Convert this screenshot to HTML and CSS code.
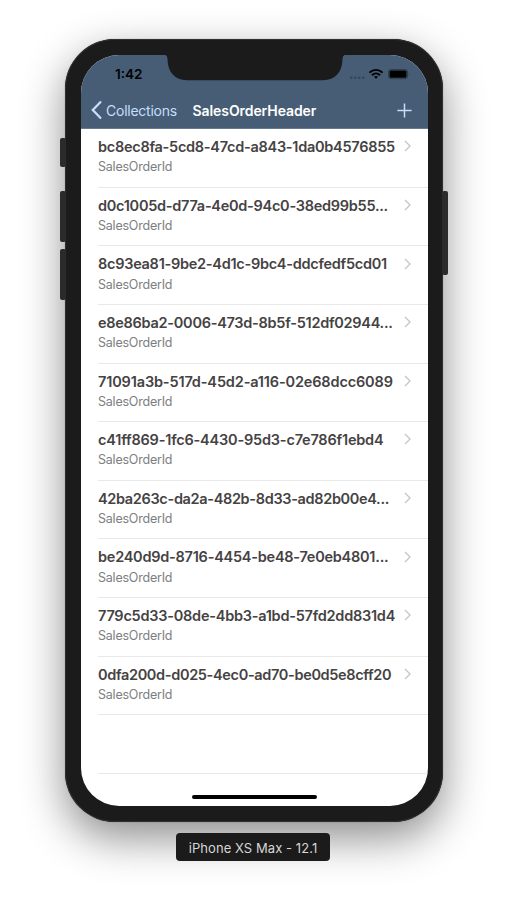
FILE: index.html
```html
<!DOCTYPE html>
<html lang="en">
<head>
<meta charset="utf-8">
<title>SalesOrderHeader</title>
<link rel="stylesheet" href="styles.css">
</head>
<body>
<main class="stage">
  <div class="phone">
    <i class="key mute"></i><i class="key up"></i><i class="key down"></i><i class="key power"></i>
    <div class="screen">
      <header class="top">
        <div class="status">
          <span class="time">1:42</span>
          <svg class="signals" width="62" height="14" viewBox="0 0 62 14">
            <g fill="#34475a"><circle cx="2.200" cy="10.800" r="1.300"/><circle cx="6.200" cy="10.800" r="1.300"/><circle cx="10.200" cy="10.800" r="1.300"/><circle cx="14.200" cy="10.800" r="1.300"/></g>
            <g fill="none" stroke="#000" stroke-width="1.900"><path d="M20.400 5.600C24.200 1.900 29.800 1.900 33.600 5.600"/><path d="M22.900 8.200C25.300 5.900 28.700 5.900 31.100 8.200"/></g>
            <path d="M25 9.700C26.200 8.700 27.800 8.700 29 9.700L27 11.800Z"/>
            <rect x="39.500" y="2.500" width="19" height="9.200" rx="2.400" fill="none" stroke="#2f3f50"/>
            <rect x="40.500" y="3.400" width="17" height="7.400" rx="1.400"/>
            <path d="M59.800 5.500Q61.100 7.100 59.800 8.700Z" fill="#2f3f50"/>
          </svg>
        </div>
        <nav class="bar">
          <svg class="back" width="11" height="18" viewBox="0 0 11 18"><path d="M9.300 1.200L1.800 9L9.300 16.800" fill="none" stroke="#c5defb" stroke-width="2.300" stroke-linecap="round"/></svg>
          <span class="link">Collections</span>
          <h1 class="title">SalesOrderHeader</h1>
          <svg class="add" width="15" height="15" viewBox="0 0 15 15"><path d="M7.500 .4V14.600M.4 7.500H14.600" stroke="#c5defb" stroke-width="1.500"/></svg>
        </nav>
      </header>
      <ul class="list">
        <li class="row"><div class="cell"><b class="snug">bc8ec8fa-5cd8-47cd-a843-1da0b4576855</b><small>SalesOrderId</small></div><svg class="go" viewBox="0 0 7 12"><path d="M1 1L6 6L1 11"/></svg></li>
        <li class="row"><div class="cell"><b class="snug">d0c1005d-d77a-4e0d-94c0-38ed99b55...</b><small>SalesOrderId</small></div><svg class="go" viewBox="0 0 7 12"><path d="M1 1L6 6L1 11"/></svg></li>
        <li class="row"><div class="cell"><b class="snug">8c93ea81-9be2-4d1c-9bc4-ddcfedf5cd01</b><small>SalesOrderId</small></div><svg class="go" viewBox="0 0 7 12"><path d="M1 1L6 6L1 11"/></svg></li>
        <li class="row"><div class="cell"><b class="snug">e8e86ba2-0006-473d-8b5f-512df02944...</b><small>SalesOrderId</small></div><svg class="go" viewBox="0 0 7 12"><path d="M1 1L6 6L1 11"/></svg></li>
        <li class="row"><div class="cell"><b class="wide">71091a3b-517d-45d2-a116-02e68dcc6089</b><small>SalesOrderId</small></div><svg class="go" viewBox="0 0 7 12"><path d="M1 1L6 6L1 11"/></svg></li>
        <li class="row"><div class="cell"><b class="loose">c41ff869-1fc6-4430-95d3-c7e786f1ebd4</b><small>SalesOrderId</small></div><svg class="go" viewBox="0 0 7 12"><path d="M1 1L6 6L1 11"/></svg></li>
        <li class="row"><div class="cell"><b class="tight">42ba263c-da2a-482b-8d33-ad82b00e4...</b><small>SalesOrderId</small></div><svg class="go" viewBox="0 0 7 12"><path d="M1 1L6 6L1 11"/></svg></li>
        <li class="row"><div class="cell"><b>be240d9d-8716-4454-be48-7e0eb4801...</b><small>SalesOrderId</small></div><svg class="go" viewBox="0 0 7 12"><path d="M1 1L6 6L1 11"/></svg></li>
        <li class="row"><div class="cell"><b>779c5d33-08de-4bb3-a1bd-57fd2dd831d4</b><small>SalesOrderId</small></div><svg class="go" viewBox="0 0 7 12"><path d="M1 1L6 6L1 11"/></svg></li>
        <li class="row"><div class="cell"><b class="tight">0dfa200d-d025-4ec0-ad70-be0d5e8cff20</b><small>SalesOrderId</small></div><svg class="go" viewBox="0 0 7 12"><path d="M1 1L6 6L1 11"/></svg></li>
        <li class="row"></li>
      </ul>
      <svg class="notch" width="184" height="27" viewBox="0 0 184 27"><path d="M0 0H184V.8H183Q179.500 .8 179.500 5C179.500 18 172 26.200 160 26.200H24C12 26.200 4.500 18 4.500 5Q4.500 .8 1 .8H0Z" fill="#1b1b1b"/></svg>
      <i class="home"></i>
    </div>
  </div>
  <div class="caption">iPhone XS Max - 12.1</div>
</main>
</body>
</html>
```
FILE: styles.css
```css
* { box-sizing: border-box; }
body { margin: 0; background: #fff; font-family: Inter, "Liberation Sans", sans-serif; }
.stage { width: 508px; height: 897px; padding-top: 39px; display: flex; flex-direction: column; align-items: center; overflow: hidden; }
.phone {
  position: relative; width: 378px; height: 782.500px; flex: none; padding: 16px 15px 15.500px 16px;
  background: #1b1b1b; border-radius: 50px;
  box-shadow: inset 0 0 0 1px #303030, 0 0 1px rgba(0,0,0,.5), 0 16px 44px rgba(0,0,0,.45);
}
.screen { position: relative; height: 751px; background: #fff; border-radius: 38px; overflow: hidden; }
.notch { position: absolute; top: -1px; left: 82px; }
.home { position: absolute; left: 111px; bottom: 7px; width: 125px; height: 4px; border-radius: 2px; background: #000; }
.key { position: absolute; width: 6px; background: #2b2b2b; border-radius: 2px; }
.mute { left: -5px; top: 99px; height: 29px; }
.up { left: -5px; top: 152px; height: 51px; }
.down { left: -5px; top: 210px; height: 51px; }
.power { right: -5px; top: 152px; height: 84px; }
.top { height: 74.200px; background: #475d75; border-bottom: 1px solid #657990; }
.status { height: 37px; display: flex; justify-content: space-between; align-items: center; padding: 1px 17px 0 34px; }
.time { font-size: 13.500px; font-weight: 600; }
.signals { display: block; }
.bar { height: 36px; display: flex; align-items: center; padding: 0 16.500px 0 10px; color: #fff; }
.link { margin-left: 4px; width: 86.500px; color: #c5defb; font-size: 14px; letter-spacing: -.24px; white-space: nowrap; }
.title { margin: 0; font-size: 14px; font-weight: 600; letter-spacing: -.08px; flex: 1; white-space: nowrap; }
.list { list-style: none; margin: 0; padding: 0 0 0 17px; }
.row { height: 58.600px; border-bottom: 1px solid #e8e8e9; display: flex; align-items: flex-start; justify-content: space-between; padding: 9px 17px 0 0; }
.cell { display: flex; flex-direction: column; width: 300px; }
b { font-size: 14.500px; line-height: 18px; font-weight: 600; color: #454243; letter-spacing: -.245px; white-space: nowrap; }
.snug { letter-spacing: -.275px; }
.tight { letter-spacing: -.34px; }
.loose { letter-spacing: -.2px; }
.wide { letter-spacing: -.15px; }
small { font-size: 12.500px; line-height: 16px; margin-top: 3.300px; color: #7e7e80; letter-spacing: -.22px; }
.go { width: 7px; height: 12px; margin-top: 2.300px; fill: none; stroke: #c7c7cb; stroke-width: 1.400; flex: none; }
.caption { position: relative; margin-top: 11.500px; margin-right: 2px; width: 154px; height: 28px; flex: none; border-radius: 4px; background: #1b1b1b; color: #d6d6d6; font-size: 13px; line-height: 31px; letter-spacing: .07px; text-align: center; white-space: nowrap; }
```
